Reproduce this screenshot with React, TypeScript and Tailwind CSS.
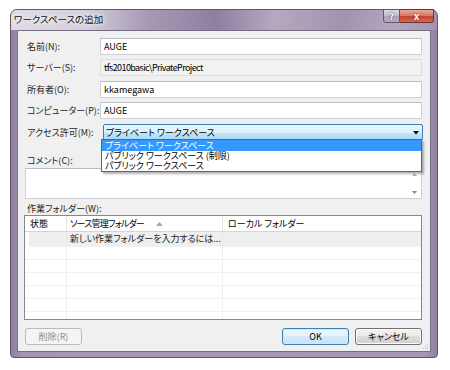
import React from 'react';

const font = "font-['Noto_Sans_CJK_JP','Noto_Sans',sans-serif] [font-feature-settings:'palt']";

function Field({ label, children, className = '' }: { label: string; children: React.ReactNode; className?: string }) {
  return (
    <div className={`flex items-center h-[17px] ${className}`}>
      <div className="w-[75px] pl-[2px] text-[#1e1e1e]">{label}</div>
      <div className="flex-1 h-full">{children}</div>
    </div>
  );
}

function TextBox({ value, readOnly = false }: { value: string; readOnly?: boolean }) {
  return (
    <div
      className={`h-full border flex items-center px-[3px] ${
        readOnly ? 'bg-[#f2f2f2] border-[#dedede] tracking-[-0.6px]' : 'bg-white border-[#cdd0d5] border-t-[#b9bcc2]'
      }`}
    >
      {value}
    </div>
  );
}

function Btn({ label, w, state }: { label: string; w: string; state?: 'disabled' | 'focus' }) {
  const base = `${w} h-[17px] rounded-[3px] border flex items-center justify-center`;
  if (state === 'disabled')
    return <div className={`${base} border-[#b9bcbf] bg-[#f4f4f4] text-[#8d8d8d]`}>{label}</div>;
  if (state === 'focus')
    return (
      <div className={`${base} border-[#3c7fb1] bg-[linear-gradient(#eaf6fd_0%,#e4f2fb_50%,#d4eaf8_50%,#c8e3f5_100%)] shadow-[inset_0_0_0_1px_#cdeafa]`}>
        {label}
      </div>
    );
  return (
    <div className={`${base} border-[#707070] bg-[linear-gradient(#f2f2f2_0%,#ebebeb_50%,#dddddd_50%,#cfcfcf_100%)] shadow-[inset_0_0_0_1px_#fcfcfc]`}>
      {label}
    </div>
  );
}

export default function App() {
  const emptyRows = [0, 1, 2, 3, 4];
  return (
    <div className={`w-[450px] h-[370px] bg-white pl-[10px] pt-[9px] text-[9px] leading-[12px] text-black ${font}`}>
      <div className="w-[428px] h-[349px] rounded-t-[7px] rounded-b-[4px] border border-[#615868] bg-[linear-gradient(90deg,#8f7fa2_0%,#a496b3_3%,#a799b5_97%,#8f80a1_100%)] flex flex-col px-[6px] pb-[5px]">
        {/* title bar */}
        <div className="h-[20px] -mx-[6px] px-[3px] rounded-t-[6px] bg-[linear-gradient(90deg,#e0dce4_0%,#d3cdd9_18%,#a799b5_32%,#8d7fa0_48%,#b4a9c0_62%,#a193b0_78%,#b2a7be_90%,#a395b2_100%)] flex items-start justify-between">
          <div className="pt-[3px] text-[9.5px] text-[#111] [text-shadow:0_0_4px_#fff,0_0_6px_#fff]">ワークスペースの追加</div>
          <div className="flex -mt-px">
            <div className="w-[17px] h-[14px] rounded-bl-[3px] border border-[#5e566a] bg-[linear-gradient(#dcd6e2_0%,#c3bacd_50%,#ab9fb8_50%,#b8aec4_100%)] flex items-center justify-center text-[9px] leading-none text-white font-bold [text-shadow:0_0_2px_#333]">
              ?
            </div>
            <div className="w-[34px] h-[14px] rounded-br-[3px] border border-l-0 border-[#6a3530] bg-[linear-gradient(#eaa89a_0%,#d9725f_50%,#c43f2a_50%,#d46a55_100%)] flex items-center justify-center text-[10px] leading-none text-white font-bold [text-shadow:0_0_2px_#5a1a10]">
              x
            </div>
          </div>
        </div>

        {/* client */}
        <div className="relative flex-1 border border-[#776d82] bg-[#f0f0f0] pl-[7px] pr-[8px] pt-[7px] flex flex-col">
          <Field label="名前(N):">
            <TextBox value="AUGE" />
          </Field>
          <Field label="サーバー(S):" className="mt-[4px]">
            <TextBox value="tfs2010basic\PrivateProject" readOnly />
          </Field>
          <Field label="所有者(O):" className="mt-[5px]">
            <TextBox value="kkamegawa" />
          </Field>
          <Field label="コンピューター(P):" className="mt-[4px]">
            <TextBox value="AUGE" />
          </Field>
          <Field label="アクセス許可(M):" className="mt-[5px] h-[16px]">
            <div className="relative h-full ml-[3px] -mr-[1px] rounded-[2px] border border-[#3c7fb1] bg-[linear-gradient(#eaf6fd_0%,#d9f0fc_50%,#bee6fd_50%,#a7d9f5_100%)] flex items-center pl-[2px] pr-[3px]">
              <span className="flex-1">プライベート ワークスペース</span>
              <svg width="6" height="4" viewBox="0 0 6 4">
                <path d="M0 0H6L3 3.5Z" fill="#000" />
              </svg>
              <div className="absolute top-[14px] left-[-3px] right-[0px] z-10 border border-[#646464] bg-white shadow-[2px_2px_2px_rgba(0,0,0,0.3)] leading-[10px]">
                <div className="h-[11px] pl-[3px] bg-[#3399ff] text-white flex items-center">プライベート ワークスペース</div>
                <div className="h-[10px] pl-[3px] flex items-center">パブリック ワークスペース (制限)</div>
                <div className="h-[10px] pl-[3px] flex items-center">パブリック ワークスペース</div>
              </div>
            </div>
          </Field>

          <div className="mt-[13px] h-[14px] leading-[14px] pl-[2px] text-[#1e1e1e]">コメント(C):</div>
          <div className="h-[31px] border border-[#cdd0d5] border-t-[#b9bcc2] bg-white flex justify-end">
            <div className="w-[14px] flex flex-col items-center justify-between py-[4px]">
              <svg width="5" height="3" viewBox="0 0 5 3">
                <path d="M0 3L2.5 0L5 3Z" fill="#b4b4b4" />
              </svg>
              <svg width="5" height="3" viewBox="0 0 5 3">
                <path d="M0 0H5L2.5 3Z" fill="#8a8a8a" />
              </svg>
            </div>
          </div>

          <div className="mt-[3px] h-[13px] leading-[13px] pl-[2px] text-[#1e1e1e]">作業フォルダー(W):</div>
          <div className="-ml-px h-[105px] border border-[#828790] bg-white flex flex-col overflow-hidden">
            <div className="h-[16px] shrink-0 border-b border-[#d5d5d5] flex items-center">
              <div className="w-[42px] h-full pl-[5px] border-r border-[#e5e5e5] flex items-center">状態</div>
              <div className="w-[156px] h-full pl-[3px] border-r border-[#e5e5e5] flex items-center">
                <span className="tracking-[-0.8px]">ソース管理フォルダー</span>
                <svg className="ml-[12px]" width="7" height="4" viewBox="0 0 7 4">
                  <path d="M0 4L3.5 0L7 4Z" fill="#a4aab0" />
                </svg>
              </div>
              <div className="flex-1 pl-[5px]">ローカル フォルダー</div>
            </div>
            <div className="h-[15px] shrink-0 flex pl-[4px]">
              <div className="flex-1 flex bg-[#efefef] border-b border-[#f0f0f0]">
                <div className="w-[38px] border-r border-[#e9e9e9]" />
                <div className="w-[156px] border-r border-[#e9e9e9] pl-[3px] flex items-center text-[#222]">
                  新しい作業フォルダーを入力するには...
                </div>
                <div className="flex-1" />
              </div>
            </div>
            {emptyRows.map((r) => (
              <div key={r} className="h-[13px] shrink-0 flex border-b border-[#f0f0f0]">
                <div className="w-[42px] border-r border-[#efefef]" />
                <div className="w-[156px] border-r border-[#efefef]" />
                <div className="flex-1" />
              </div>
            ))}
            <div className="flex-1 flex">
              <div className="w-[42px] border-r border-[#efefef]" />
              <div className="w-[156px] border-r border-[#efefef]" />
              <div className="flex-1" />
            </div>
          </div>

          <div className="mt-[8px] flex items-center">
            <Btn label="削除(R)" w="w-[57px]" state="disabled" />
            <div className="flex-1" />
            <Btn label="OK" w="w-[67px]" state="focus" />
            <div className="w-[6px]" />
            <Btn label="キャンセル" w="w-[67px]" />
          </div>

          <svg className="absolute right-[1px] bottom-[1px]" width="8" height="8" viewBox="0 0 8 8">
            <rect x="6" y="2" width="1" height="1" fill="#b8b8b8" />
            <rect x="4" y="4" width="1" height="1" fill="#b8b8b8" />
            <rect x="6" y="4" width="1" height="1" fill="#b8b8b8" />
            <rect x="2" y="6" width="1" height="1" fill="#b8b8b8" />
            <rect x="4" y="6" width="1" height="1" fill="#b8b8b8" />
            <rect x="6" y="6" width="1" height="1" fill="#b8b8b8" />
          </svg>
        </div>
      </div>
    </div>
  );
}
